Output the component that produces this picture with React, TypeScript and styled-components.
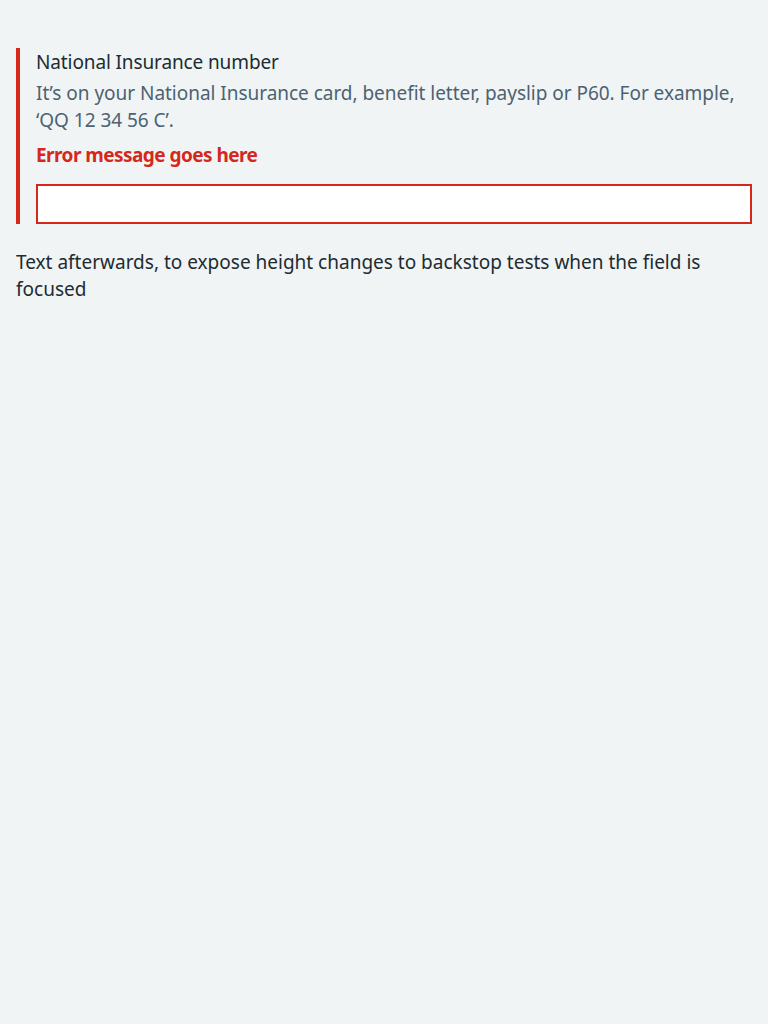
import React from "react";
import styled, { createGlobalStyle } from "styled-components";

const GlobalStyle = createGlobalStyle`
  html, body { margin: 0; padding: 0; background: #f0f4f5; }
  body {
    font-family: "Noto Sans", "Liberation Sans", sans-serif;
    color: #212b32;
    -webkit-font-smoothing: antialiased;
  }
`;

const Page = styled.div`
  padding: 48px 16px 16px;
`;

const FormGroup = styled.div<{ $error?: boolean }>`
  display: flex;
  flex-direction: column;
  border-left: 4px solid ${(p) => (p.$error ? "#d5281b" : "transparent")};
  padding: 1px 0 0 16px;
  margin-bottom: 25px;
`;

const Label = styled.label`
  font-size: 19px;
  line-height: 27px;
  font-weight: 400;
  letter-spacing: -0.12px;
  color: #212b32;
  margin-bottom: 4px;
`;

const Hint = styled.div`
  font-size: 19px;
  line-height: 27px;
  letter-spacing: -0.03px;
  color: #4c6272;
  margin-bottom: 8px;
`;

const ErrorMessage = styled.span`
  font-size: 19px;
  line-height: 27px;
  font-weight: 700;
  letter-spacing: -0.55px;
  color: #d5281b;
  margin-bottom: 15px;
`;

const Input = styled.input`
  box-sizing: border-box;
  height: 40px;
  width: 100%;
  margin: 0;
  padding: 4px 8px;
  border: 2px solid #d5281b;
  border-radius: 0;
  background: #ffffff;
  font: inherit;
  font-size: 19px;
  outline: none;
`;

const Body = styled.p`
  margin: 0;
  font-size: 19px;
  line-height: 27px;
  color: #212b32;
`;

export default function App() {
  return (
    <>
      <GlobalStyle />
      <Page>
        <FormGroup $error>
          <Label htmlFor="ni">National Insurance number</Label>
          <Hint>
            It’s on your National Insurance card, benefit letter, payslip or P60. For example, ‘QQ 12 34 56 C’.
          </Hint>
          <ErrorMessage>Error message goes here</ErrorMessage>
          <Input id="ni" type="text" />
        </FormGroup>
        <Body>
          Text afterwards, to expose height changes to backstop tests when the field is focused
        </Body>
      </Page>
    </>
  );
}
